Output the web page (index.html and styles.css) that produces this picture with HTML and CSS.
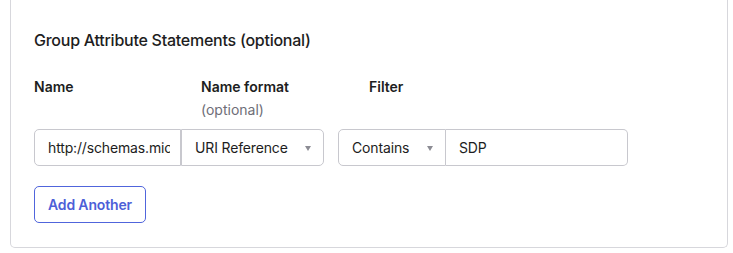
FILE: index.html
```html
<!DOCTYPE html>
<html>
<head>
<meta charset="utf-8">
<link rel="stylesheet" href="styles.css">
</head>
<body>
<div class="card">
  <h2 class="title">Group Attribute Statements (optional)</h2>
  <div class="labels">
    <div class="lbl">Name</div>
    <div class="lbl">Name format<span class="opt">(optional)</span></div>
    <div class="lbl lbl-filter">Filter</div>
  </div>
  <div class="row">
    <div class="group">
      <input class="field field-name" type="text" value="http://schemas.microsoft.com/ws/2008/06/identity/claims/groups">
      <div class="select select-format">URI Reference<span class="caret"></span></div>
    </div>
    <div class="group">
      <div class="select select-filter">Contains<span class="caret"></span></div>
      <input class="field field-value" type="text" value="SDP">
    </div>
  </div>
  <button class="btn" type="button">Add Another</button>
</div>
</body>
</html>
```

FILE: styles.css
```css
* { box-sizing: border-box; }
html, body { margin: 0; padding: 0; background: #fff; }
body {
  font-family: Inter, "Noto Sans", "Liberation Sans", sans-serif;
  color: #1d1d21;
  font-size: 14px;
  line-height: 20px;
}
.card {
  margin-left: 10px;
  width: 718px;
  height: 248px;
  border: 1px solid #d7d7dc;
  border-top: 0;
  border-radius: 0 0 5px 5px;
  padding: 30px 23px 0 23px;
}
.title {
  margin: 0;
  font-size: 16px;
  line-height: 20px;
  font-weight: 500;
  letter-spacing: -0.25px;
  color: #1d1d21;
}
.labels {
  display: grid;
  grid-template-columns: 167px 168px 200px;
  margin-top: 27px;
}
.lbl {
  font-weight: 600;
  font-size: 14px;
  line-height: 20px;
}
.opt {
  display: block;
  margin-top: 3px;
  font-weight: 400;
  color: #6e6e78;
}
.row {
  display: flex;
  gap: 14px;
  margin-top: 9px;
}
.group { display: flex; }
.field, .select {
  height: 37px;
  border: 1px solid #c8c8ce;
  font-family: inherit;
  font-size: 14px;
  letter-spacing: -0.15px;
  color: #1d1d21;
  background: #fff;
}
.field {
  padding: 0 10px 0 13px;
  outline: none;
}
.select {
  display: flex;
  align-items: center;
  justify-content: space-between;
  padding: 0 12px 0 13px;
}
.caret {
  width: 0;
  height: 0;
  border-left: 3.5px solid transparent;
  border-right: 3.5px solid transparent;
  border-top: 5px solid #8c8c94;
  margin-top: 1px;
}
.field-name {
  width: 147px;
  border-radius: 5px 0 0 5px;
}
.select-format {
  width: 143px;
  border-radius: 0 5px 5px 0;
}
.select-filter {
  width: 108px;
  border-radius: 5px 0 0 5px;
}
.field-value {
  width: 182px;
  border-left: 0;
  border-radius: 0 5px 5px 0;
}
.btn {
  margin-top: 20px;
  height: 37px;
  padding: 0 13px;
  border: 1px solid #5065dc;
  border-radius: 5px;
  background: #fff;
  color: #4d5fd8;
  font-family: inherit;
  font-size: 14px;
  font-weight: 600;
  letter-spacing: -0.15px;
}
```
